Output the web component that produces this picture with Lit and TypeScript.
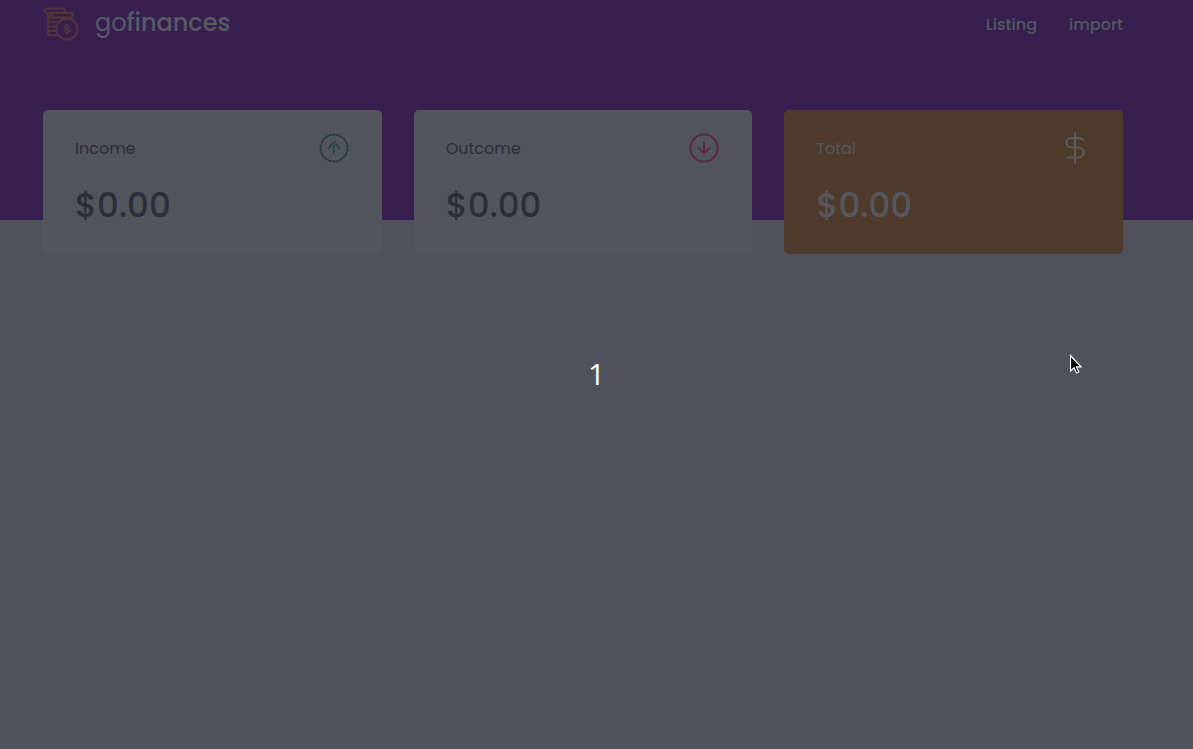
import { LitElement, html, css, svg } from "lit";
import { customElement, property } from "lit/decorators.js";

const upIcon = svg`<circle cx="16" cy="16" r="13.6"/><path d="M16 21.5V11M10.5 16l5.5-5.5 5.5 5.5"/>`;
const downIcon = svg`<circle cx="16" cy="16" r="13.6"/><path d="M16 10v11.5M10.5 16l5.5 5.5 5.5-5.5"/>`;
const upSpeckle = svg`<circle cx="16" cy="16" r="14.2"/><path d="M16.500 21.500V11M11 15.500l5-5 5 5"/>`;
const dollarIcon = svg`<path d="M16 1v30M24 8C23 6.400 21.500 6 20 6H12.500C9.500 6 7.500 8 7.500 10.700S9.500 15.500 12.500 15.500H19.500C22.500 15.500 24.500 17.700 24.500 20.500S22.500 25.500 19.500 25.500H7.500"/>`;

@customElement("summary-card")
export class SummaryCard extends LitElement {
  @property() label = "";
  @property() value = "";
  @property({ reflect: true }) kind: "income" | "outcome" | "total" = "income";

  static styles = css`
    :host {
      display: block;
      padding: 22px 32px;
      border-radius: 5px;
      background: #53555c;
      color: #2c2d3b;
    }
    :host([kind="total"]) {
      background: #4f3b2b;
      color: #565860;
    }
    .head {
      display: flex;
      align-items: center;
      justify-content: space-between;
    }
    .label {
      margin: 0;
      font-size: 16px;
      line-height: 26px;
      padding-top: 2px;
      font-weight: 400;
    }
    .value {
      margin: 14px 0 0;
      font-size: 34px;
      line-height: 54px;
      font-weight: 500;
    }
    .icon {
      width: 32px;
      height: 32px;
      fill: none;
      stroke: #31383f;
      stroke-width: 2;
      stroke-linecap: round;
      stroke-linejoin: round;
    }
    :host([kind="outcome"]) .icon {
      stroke: #5a2a3c;
    }
    :host([kind="total"]) .icon {
      stroke: #5a5a61;
    }
    .speckle {
      stroke: #2b8f5c;
      stroke-width: 1;
      stroke-dasharray: 1 3;
      stroke-linecap: butt;
    }
  `;

  render() {
    const glyph = { income: upIcon, outcome: downIcon, total: dollarIcon }[this.kind];
    return html`
      <header class="head">
        <h2 class="label">${this.label}</h2>
        <svg class="icon" viewBox="0 0 32 32" aria-hidden="true">
          ${glyph}
          ${this.kind === "income" ? svg`<g class="speckle">${upSpeckle}</g>` : null}
        </svg>
      </header>
      <p class="value">${this.value}</p>
    `;
  }
}

@customElement("app-root")
export class AppRoot extends LitElement {
  static styles = css`
    :host {
      display: block;
      position: relative;
      min-height: 100vh;
      background: #4f525a;
      font-family: "Poppins", "Inter", sans-serif;
    }
    .top {
      box-sizing: border-box;
      height: 220px;
      padding: 4px 70px 0 43px;
      background: #371f50;
    }
    .bar {
      display: flex;
      align-items: center;
      justify-content: space-between;
      height: 40px;
    }
    .brand {
      display: flex;
      align-items: center;
      gap: 16px;
      color: #585b66;
      font-size: 24px;
      line-height: 34px;
      text-decoration: none;
    }
    .name {
      padding-bottom: 2px;
    }
    .name b {
      font-weight: 500;
    }
    .logo {
      width: 36px;
      height: 36px;
      fill: none;
      stroke: #523637;
      stroke-width: 2;
      stroke-linejoin: round;
      stroke-linecap: round;
    }
    nav {
      display: flex;
      gap: 32px;
      padding-top: 2px;
    }
    nav a {
      color: #54585f;
      font-size: 16px;
      line-height: 24px;
      font-weight: 500;
      text-decoration: none;
    }
    .cards {
      display: grid;
      grid-template-columns: repeat(3, 1fr);
      gap: 32px;
      margin-top: -110px;
      padding: 0 70px 0 43px;
    }
    .countdown {
      position: absolute;
      inset: 0;
      display: grid;
      place-items: center;
      padding-bottom: 2px;
      color: #fff;
      font: 30px/40px "Open Sans", sans-serif;
      pointer-events: none;
    }
    .pointer {
      position: absolute;
      left: 1070px;
      top: 354px;
      width: 12px;
      height: 21px;
    }
  `;

  render() {
    return html`
      <header class="top">
        <div class="bar">
          <a class="brand" href="#">
            <svg class="logo" viewBox="0 0 36 36" aria-hidden="true">
              <rect x="1.500" y="2.500" width="20" height="4.500" rx="2.250" />
              <path d="M10 7h17.500a2.200 2.200 0 0 1 0 4.500H11.500A2.200 2.200 0 0 1 9.500 7.500M5 7.500v2a2 2 0 0 0 2 2h5M14 16H7a2.200 2.200 0 0 1 0-4.500M12.500 20.500H7A2.200 2.200 0 0 1 7 16M13 25H7a2.200 2.200 0 0 1 0-4.500M15 29.500H7A2.200 2.200 0 0 1 7 25" />
              <circle cx="24" cy="23" r="10.500" />
              <path d="M26.500 21c-1-1.500-5-1.500-5 .5s5 1.500 5 3.500-4 2-5 .5M24 18.500v2M24 26v2" />
            </svg>
            <span class="name">go<b>finances</b></span>
          </a>
          <nav>
            <a href="#listing">Listing</a>
            <a href="#import">import</a>
          </nav>
        </div>
      </header>
      <main class="cards">
        <summary-card kind="income" label="Income" value="$0.00"></summary-card>
        <summary-card kind="outcome" label="Outcome" value="$0.00"></summary-card>
        <summary-card kind="total" label="Total" value="$0.00"></summary-card>
      </main>
      <div class="countdown">1</div>
      <svg class="pointer" viewBox="0.500 0 12 21" aria-hidden="true">
        <path d="M1 1.500V17l3.500-3.300 2.500 5.300 2.300-1-2.400-5.200H11.500z" fill="#000" stroke="#fff" stroke-width="1.200" />
      </svg>
    `;
  }
}
